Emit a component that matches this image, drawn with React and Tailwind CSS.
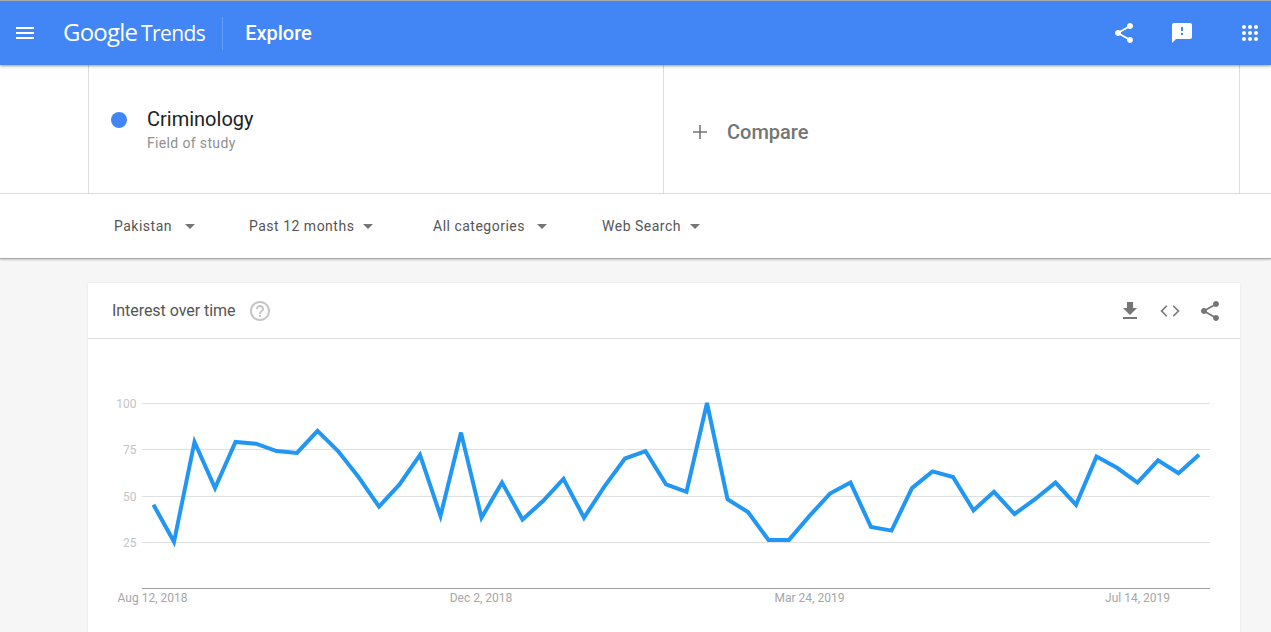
import React from 'react';

const VALUES = [45, 25, 79, 54, 79, 78, 74, 73, 85, 74, 60, 44, 56, 72, 39, 84, 38, 57, 37, 47, 59, 38, 55, 70, 74, 56, 52, 100, 48, 41, 26, 26, 39, 51, 57, 33, 31, 54, 63, 60, 42, 52, 40, 48, 57, 45, 71, 65, 57, 69, 62, 72];

const SHARE = 'M18 16.08c-.76 0-1.44.3-1.96.77L8.91 12.7c.05-.23.09-.46.09-.7s-.04-.47-.09-.7l7.05-4.11c.54.5 1.25.81 2.04.81 1.66 0 3-1.34 3-3s-1.34-3-3-3-3 1.34-3 3c0 .24.04.47.09.7L8.04 9.81C7.5 9.31 6.79 9 6 9c-1.66 0-3 1.34-3 3s1.34 3 3 3c.79 0 1.5-.31 2.04-.81l7.12 4.16c-.05.21-.08.43-.08.65 0 1.61 1.31 2.92 2.92 2.92 1.61 0 2.92-1.31 2.92-2.92s-1.31-2.92-2.92-2.92z';
const FEEDBACK = 'M20 2H4c-1.1 0-1.99.9-1.99 2L2 22l4-4h14c1.1 0 2-.9 2-2V4c0-1.1-.9-2-2-2zm-7 12h-2v-2h2v2zm0-4h-2V6h2v4z';
const DOWNLOAD = 'M19 9h-4V3H9v6H5l7 7 7-7zM5 18v2h14v-2H5z';
const HELP = 'M11 18h2v-2h-2v2zm1-16C6.48 2 2 6.48 2 12s4.48 10 10 10 10-4.48 10-10S17.52 2 12 2zm0 18c-4.41 0-8-3.59-8-8s3.59-8 8-8 8 3.59 8 8-3.59 8-8 8zm0-14c-2.21 0-4 1.79-4 4h2c0-1.1.9-2 2-2s2 .9 2 2c0 2-3 1.75-3 5h2c0-2.25 3-2.5 3-5 0-2.21-1.79-4-4-4z';
const MENU = 'M3 18h18v-2H3v2zm0-5h18v-2H3v2zm0-7v2h18V6H3z';

const Icon = ({ d, className }) => (
  <svg viewBox="0 0 24 24" className={className} fill="currentColor">
    <path d={d} />
  </svg>
);

const CodeIcon = () => (
  <svg viewBox="0 0 24 24" className="w-6 h-6" fill="none" stroke="currentColor" strokeWidth="1.6">
    <path d="M8.8 6.8L3.6 12l5.2 5.2M15.2 6.8l5.2 5.2-5.2 5.2" />
  </svg>
);

const AppsIcon = () => (
  <svg viewBox="0 0 16 16" className="w-4 h-4 text-white" fill="currentColor">
    {[2, 8, 14].map((y) =>
      [2, 8, 14].map((x) => <circle key={`${x}-${y}`} cx={x} cy={y} r="2" />)
    )}
  </svg>
);

const Filter = ({ label, gap, width }) => (
  <div className={`flex items-center ${width}`}>
    <span className="text-[14px] tracking-[0.5px] text-[#555]">{label}</span>
    <span className={`${gap} w-0 h-0 border-x-[5px] border-x-transparent border-t-[5px] border-t-[#757575]`} />
  </div>
);

const Chart = () => {
  const toX = (i) => 153.5 + i * 20.5;
  const toY = (v) => 588 - v * 1.85;
  const points = VALUES.map((v, i) => `${toX(i).toFixed(1)},${toY(v).toFixed(1)}`).join(' ');
  const ticks = [
    { label: '100', y: 403.5 },
    { label: '75', y: 449.5 },
    { label: '50', y: 496.5 },
    { label: '25', y: 542.5 },
  ];
  const dates = [
    { label: 'Aug 12, 2018', x: 152.5 },
    { label: 'Dec 2, 2018', x: 481 },
    { label: 'Mar 24, 2019', x: 809.5 },
    { label: 'Jul 14, 2019', x: 1137.5 },
  ];
  return (
    <svg width="1152" height="293" viewBox="88 339 1152 293" className="block">
      {ticks.map((t) => (
        <g key={t.label}>
          <line x1="142" x2="1210" y1={t.y} y2={t.y} stroke="#e0e0e0" />
          <text x="136.5" y={t.y + 4} textAnchor="end" fontSize="12" fill="#c4c4c4">{t.label}</text>
        </g>
      ))}
      <line x1="142" x2="1210" y1="588.5" y2="588.5" stroke="#9e9e9e" />
      <polyline points={points} fill="none" stroke="#2196f3" strokeWidth="4" strokeLinejoin="miter" />
      {dates.map((d) => (
        <text key={d.label} x={d.x} y="602" textAnchor="middle" fontSize="12" fill="#a6a6a6">{d.label}</text>
      ))}
    </svg>
  );
};

export default function App() {
  return (
    <div className="h-[632px] overflow-hidden bg-[#f6f6f6] font-['Roboto',sans-serif] border-t border-t-[#a9a9a9]">
      {/* Top bar */}
      <header className="relative z-20 h-[64px] bg-[#4285f4] flex items-center shadow-[0_1px_3px_rgba(0,0,0,0.4)] text-white">
        <Icon d={MENU} className="w-6 h-6 ml-[13px] text-white" />
        <div className="ml-[26px] mb-[3px] flex items-baseline font-['Open_Sans',sans-serif]">
          <span className="text-[24px] font-medium tracking-[-0.8px] leading-none">Google</span>
          <span className="ml-[4px] text-[21px] font-normal tracking-[-0.6px] leading-none">Trends</span>
        </div>
        <div className="ml-[17px] w-px h-[33px] bg-[#6a9ff6]" />
        <span className="ml-[22px] mb-[1px] text-[20px] font-medium">Explore</span>
        <div className="ml-auto flex items-center">
          <Icon d={SHARE} className="w-6 h-6" />
          <Icon d={FEEDBACK} className="w-6 h-6 ml-[34px]" />
          <div className="ml-[48px] mr-[13px]"><AppsIcon /></div>
        </div>
      </header>

      {/* Search terms */}
      <section className="h-[128px] bg-white pl-[88px] pr-[31px] flex">
        <div className="w-[575px] border-l border-l-[#dcdcdc] flex items-start pt-[42px] pl-[22px]">
          <span className="mt-[5px] w-4 h-4 rounded-full bg-[#4285f4]" />
          <div className="ml-[20px]">
            <div className="text-[20px] leading-[24px] text-[#202124]">Criminology</div>
            <div className="text-[14px] leading-[24px] tracking-[0.35px] text-[#8f8f8f]">Field of study</div>
          </div>
        </div>
        <div className="flex-1 border-x border-x-[#dcdcdc] flex items-center pl-[28px] pt-[6px]">
          <svg viewBox="0 0 16 16" className="w-4 h-4 text-[#757575]" fill="currentColor">
            <path d="M7.2 1h1.6v6.2H15v1.6H8.8V15H7.2V8.8H1V7.2h6.2z" />
          </svg>
          <span className="ml-[19px] text-[20px] font-medium text-[#757575]">Compare</span>
        </div>
      </section>

      {/* Filters */}
      <section className="relative z-10 h-[66px] bg-white border-t border-t-[#dcdcdc] border-b border-b-[#aaa] shadow-[0_1px_2px_rgba(0,0,0,0.2)] pl-[114px] flex items-center">
        <Filter label="Pakistan" gap="ml-[13px]" width="w-[135px]" />
        <Filter label="Past 12 months" gap="ml-[9px]" width="w-[184px]" />
        <Filter label="All categories" gap="ml-[12px]" width="w-[169px]" />
        <Filter label="Web Search" gap="ml-[9px]" width="w-[110px]" />
      </section>

      {/* Interest over time */}
      <section className="mt-[24px] ml-[88px] w-[1152px] bg-white shadow-[0_0_2px_rgba(0,0,0,0.08)]">
        <div className="h-[56px] border-b border-b-[#e0e0e0] flex items-center pl-[24px] pr-[18px]">
          <span className="text-[16px] tracking-[-0.05px] text-[#555]">Interest over time</span>
          <Icon d={HELP} className="ml-[13px] w-6 h-6 text-[#c4c4c4]" />
          <div className="ml-auto flex items-center gap-[16px] text-[#757575]">
            <Icon d={DOWNLOAD} className="w-6 h-6" />
            <CodeIcon />
            <Icon d={SHARE} className="w-6 h-6" />
          </div>
        </div>
        <Chart />
      </section>
    </div>
  );
}
